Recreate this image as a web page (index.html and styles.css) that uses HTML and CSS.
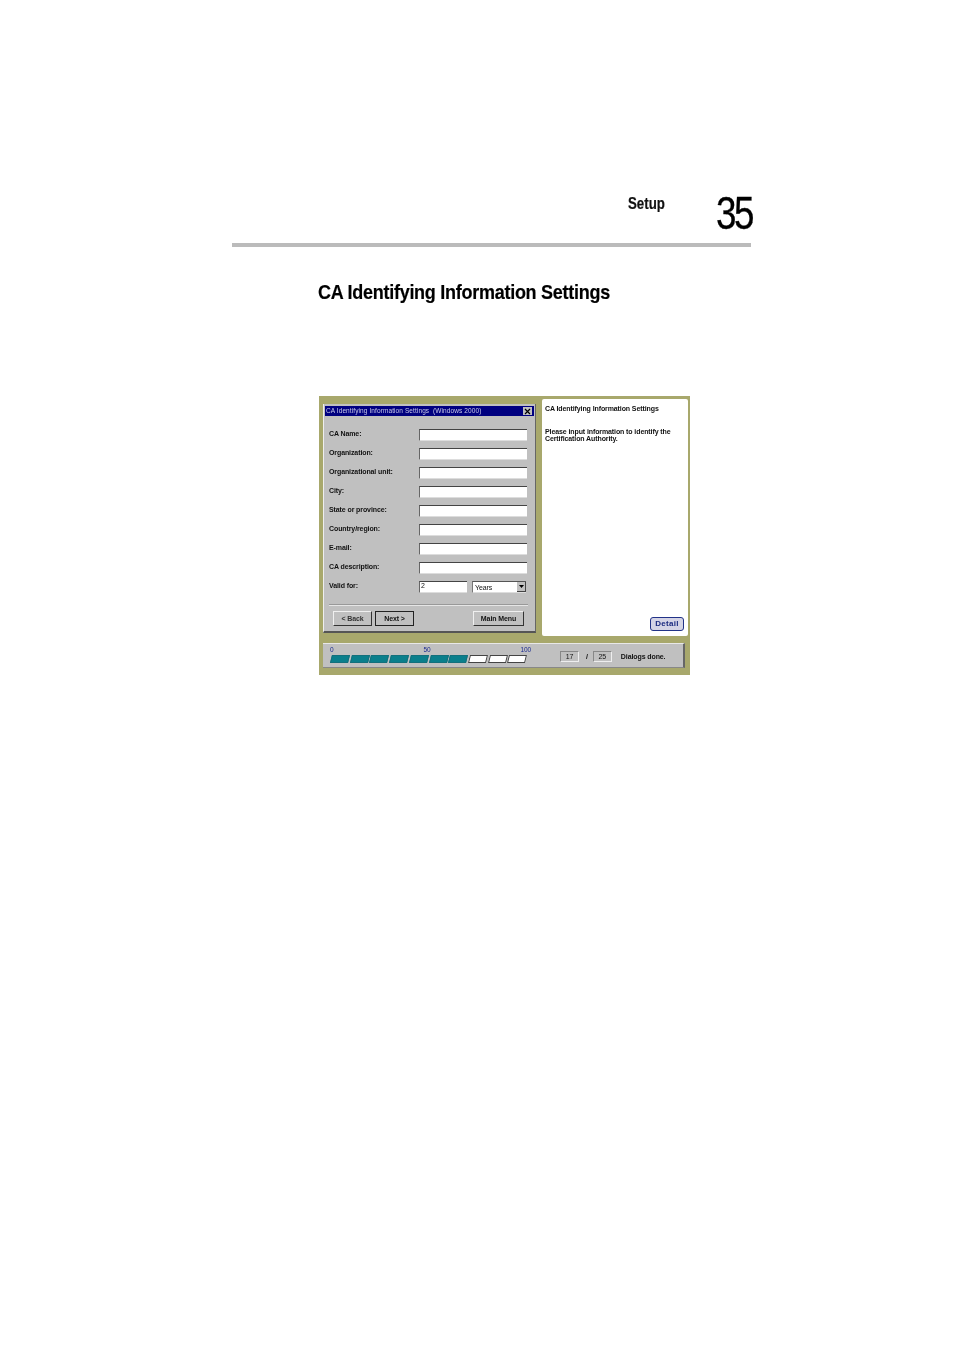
FILE: index.html
```html
<!DOCTYPE html>
<html lang="en">
<head>
<meta charset="utf-8">
<title>CA Identifying Information Settings</title>
<link rel="stylesheet" href="styles.css">
</head>
<body>
<div class="page">
  <header class="head">
    <span class="sect">Setup</span>
    <span class="num">35</span>
  </header>
  <div class="rule"></div>
  <h1 class="title">CA Identifying Information Settings</h1>
  <div class="shot">
    <div class="top">
      <div class="dialog">
        <div class="bar"><span>CA Identifying Information Settings&nbsp; (Windows 2000)</span><span class="close"><svg width="7" height="7" viewBox="0 0 7 7"><path d="M1 1l5 5M6 1l-5 5" stroke="#000" stroke-width="1.2"/></svg></span></div>
        <div class="form">
          <div class="row"><label>CA Name:</label><div class="inp"></div></div>
          <div class="row"><label>Organization:</label><div class="inp"></div></div>
          <div class="row"><label>Organizational unit:</label><div class="inp"></div></div>
          <div class="row"><label>City:</label><div class="inp"></div></div>
          <div class="row"><label>State or province:</label><div class="inp"></div></div>
          <div class="row"><label>Country/region:</label><div class="inp"></div></div>
          <div class="row"><label>E-mail:</label><div class="inp"></div></div>
          <div class="row"><label>CA description:</label><div class="inp"></div></div>
          <div class="row">
            <label>Valid for:</label>
            <div class="inp short">2</div>
            <div class="sel"><span>Years</span><span class="arrow"><svg width="5" height="3" viewBox="0 0 5 3"><path d="M0 0h5L2.500 3z"/></svg></span></div>
          </div>
        </div>
        <div class="sep"></div>
        <div class="btns">
          <div class="btn back">&lt; Back</div>
          <div class="btn next">Next &gt;</div>
          <div class="btn menu">Main Menu</div>
        </div>
      </div>
      <div class="panel">
        <p class="ptitle">CA Identifying Information Settings</p>
        <p class="pbody">Please input information to identify the Certification Authority.</p>
        <div class="detail">Detail</div>
      </div>
    </div>
    <div class="status">
      <div class="prog">
        <div class="scale"><span>0</span><span>50</span><span>100</span></div>
        <div class="segs">
          <i class="on"></i><i class="on"></i><i class="on"></i><i class="on"></i><i class="on"></i><i class="on"></i><i class="on"></i><i></i><i></i><i></i>
        </div>
      </div>
      <div class="count">17</div>
      <span class="slash">/</span>
      <div class="count">25</div>
      <span class="done">Dialogs done.</span>
    </div>
  </div>
</div>
</body>
</html>
```

FILE: styles.css
```css
* { box-sizing: border-box; }
html, body { margin: 0; padding: 0; background: #fff; }
.page { width: 954px; height: 1351px; padding-top: 193px; font-family: "Liberation Sans", Arial, sans-serif; color: #000; overflow: hidden; }
.head { margin-left: 232px; width: 519px; height: 50px; display: flex; align-items: flex-start; }
.sect { margin-left: 396px; margin-top: 1px; font-size: 16px; line-height: 19px; font-weight: bold; transform: scaleX(0.83); transform-origin: left center; color: #111; white-space: nowrap; -webkit-text-stroke: 0.2px #111; }
.num { margin-left: auto; margin-right: -1px; width: 36px; font-size: 46px; line-height: 40px; letter-spacing: -3px; transform: scaleX(0.8); transform-origin: left center; color: #000; white-space: nowrap; -webkit-text-stroke: 0.3px #000; }
.rule { margin-left: 232px; width: 519px; height: 4px; background: #bbb; }
.title { margin: 32px 0 0 318px; font-size: 21px; line-height: 26px; font-weight: bold; letter-spacing: -0.3px; white-space: nowrap; color: #000; transform: scaleX(0.856); transform-origin: left center; -webkit-text-stroke: 0.2px #000; }
.shot { margin: 91px 0 0 319px; width: 371px; height: 279px; background: #a8a86c; padding-left: 4px; filter: blur(0.45px); font-size: 7px; line-height: 9px; font-weight: bold; letter-spacing: -0.1px; color: #111; }
.top { height: 240px; display: flex; align-items: flex-start; gap: 6px; }
.dialog { margin-top: 8px; width: 213px; height: 229px; background: #c0c0c0; border-right: 1px solid #666; border-bottom: 2px solid #555; border-left: 1px solid #eee; padding-top: 2px; }
.bar { height: 10px; margin: 0 1px; background: #000080; color: #c8c8e8; font-weight: normal; font-size: 6.5px; line-height: 10px; padding-left: 1px; display: flex; justify-content: space-between; align-items: center; white-space: nowrap; letter-spacing: 0.1px; }
.close { width: 9px; height: 8px; margin-right: 2px; background: #c0c0c0; display: flex; align-items: center; justify-content: center; }
.form { margin-top: 13px; padding: 0 8px 0 5px; display: flex; flex-direction: column; gap: 7px; }
.row { height: 12px; display: flex; align-items: center; }
.row label { width: 90px; margin-top: -2px; line-height: 8px; white-space: nowrap; }
.inp { width: 108px; height: 12px; background: #fff; border-top: 1px solid #444; border-left: 1px solid #666; border-bottom: 1px solid #ddd; font-weight: normal; line-height: 8px; padding-left: 1px; }
.inp.short { width: 48px; }
.sel { margin-left: 5px; width: 54px; height: 12px; background: #fff; border-top: 1px solid #555; border-left: 1px solid #777; border-bottom: 1px solid #ddd; padding-left: 2px; display: flex; justify-content: space-between; align-items: center; font-weight: normal; }
.arrow { width: 9px; height: 10px; background: #c0c0c0; border-right: 1px solid #444; border-bottom: 1px solid #444; display: flex; align-items: center; justify-content: center; }
.sep { margin: 11px 7px 0 5px; height: 2px; border-top: 1px solid #999; border-bottom: 1px solid #e6e6e6; }
.btns { margin-top: 5px; padding: 0 11px 0 9px; display: flex; gap: 3px; }
.btn { height: 15px; display: flex; align-items: center; justify-content: center; background: #c0c0c0; border: 1px solid #f0f0f0; border-right-color: #333; border-bottom-color: #333; }
.back { width: 39px; color: #333; }
.next { width: 39px; border: 1px solid #222; }
.menu { width: 51px; margin-left: auto; }
.panel { position: relative; margin-top: 3px; width: 146px; height: 237px; background: #fff; padding: 6px 3px; border-radius: 2px; font-size: 7px; line-height: 7.5px; }
.panel p { margin: 0; }
.pbody { margin-top: 15px !important; width: 134px; }
.detail { position: absolute; right: 4px; bottom: 5px; width: 34px; height: 14px; border: 1px solid #223388; border-radius: 3px; background: #d4d4e6; color: #1a2a80; font-size: 8px; line-height: 12px; text-align: center; letter-spacing: 0.3px; }
.status { margin-top: 7px; width: 362px; height: 25px; background: #c0c0c0; border-top: 1px solid #e8e8e8; border-right: 2px solid #666; border-bottom: 1px solid #888; display: flex; align-items: center; }
.prog { margin-left: 7px; width: 201px; margin-top: -3px; }
.scale { height: 9px; display: flex; justify-content: space-between; color: #1a2a90; font-size: 6.5px; font-weight: normal; line-height: 9px; }
.segs { margin-top: 1px; margin-left: 1px; width: 195px; height: 8px; display: flex; gap: 2px; }
.segs i { display: block; flex: 1; transform: skewX(-14deg); background: #fff; border: 1px solid #444; }
.segs i.on { background: #0a7f8c; border-color: #14707c; }
.count { margin-top: 2px; width: 19px; height: 11px; border-top: 1px solid #888; border-left: 1px solid #888; border-right: 1px solid #eee; border-bottom: 1px solid #eee; text-align: center; font-weight: normal; }
.prog + .count { margin-left: 29px; }
.slash { margin: 2px 5px 0 7px; }
.done { margin-left: 9px; margin-top: 1px; white-space: nowrap; }
```
